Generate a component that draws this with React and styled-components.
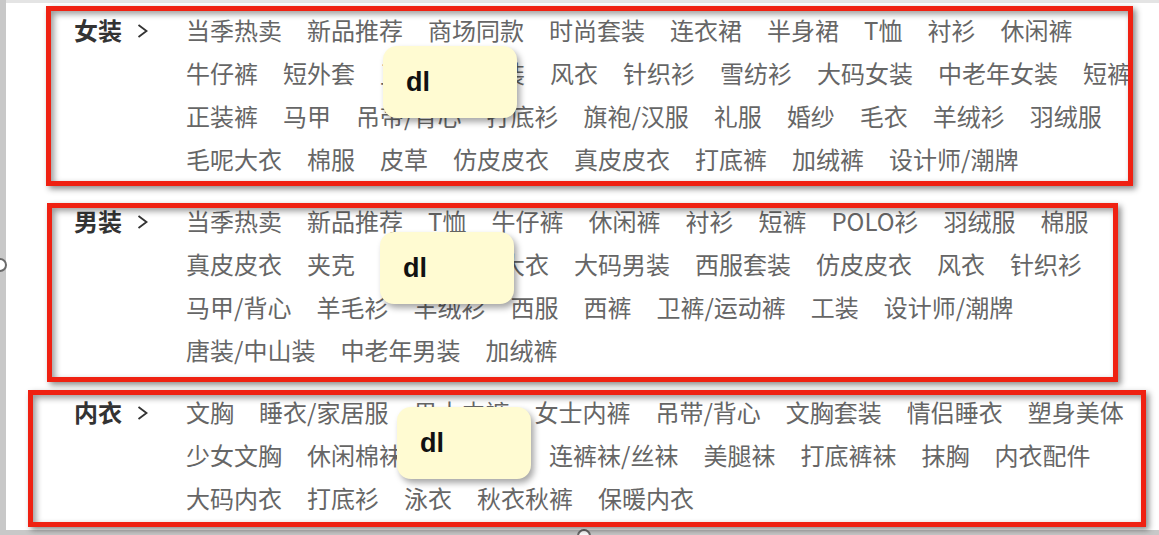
import React from 'react';
import styled, { createGlobalStyle } from 'styled-components';

const GlobalStyle = createGlobalStyle`
  html, body { margin: 0; padding: 0; background: #fff; overflow: hidden; }
  body { font-family: "Noto Sans CJK SC", "Noto Sans", sans-serif; }
`;

const Frame = styled.div`
  position: relative;
  width: 1159px;
  height: 535px;
  box-sizing: border-box;
  padding: 8px 0 0 74px;
  background: #fff;
  overflow: hidden;
  box-shadow: inset 6px 0 0 #c8c8c8, inset 0 3px 0 #e4e4e4, inset 0 -5px 0 #c8c8c8;
`;

const Category = styled.dl`
  position: relative;
  display: flex;
  width: 1076px;
  margin: 0 0 19px;
`;

const Title = styled.dt`
  flex: 0 0 112px;
  display: flex;
  align-items: center;
  gap: 15px;
  height: 43px;
  font-size: 24px;
  line-height: 43px;
  font-weight: 700;
  color: #333;
`;

const Chevron = styled.svg`
  width: 11px;
  height: 14px;
  margin-top: 2px;
  flex: none;
`;

const Items = styled.dd`
  flex: 1;
  margin: 0;
  display: flex;
  flex-wrap: wrap;
  column-gap: 25px;
`;

const Item = styled.a`
  font-size: 24px;
  line-height: 43px;
  color: #666;
  text-decoration: none;
  white-space: nowrap;
`;

const Marker = styled.div`
  position: absolute;
  left: ${(p) => p.$left}px;
  top: ${(p) => p.$top}px;
  width: ${(p) => p.$w}px;
  height: ${(p) => p.$h}px;
  box-sizing: border-box;
  border: 5px solid #ef2112;
  box-shadow: 3px 3px 6px rgba(0, 0, 0, 0.45), inset 3px 3px 6px rgba(0, 0, 0, 0.4);
  pointer-events: none;
  z-index: 2;
`;

const Tag = styled.div`
  position: absolute;
  left: ${(p) => p.$left}px;
  top: ${(p) => p.$top}px;
  width: 134px;
  height: 72px;
  box-sizing: border-box;
  padding-left: 23px;
  display: flex;
  align-items: center;
  background: #fffbd2;
  border-radius: 14px;
  box-shadow: 3px 4px 6px rgba(0, 0, 0, 0.35);
  font-family: "Liberation Sans", Arial, sans-serif;
  font-weight: 700;
  font-size: 27px;
  color: #111;
  z-index: 3;
`;

const Ring = styled.span`
  position: absolute;
  left: ${(p) => p.$left}px;
  top: ${(p) => p.$top}px;
  width: 14px;
  height: 14px;
  box-sizing: border-box;
  border: 2px solid #6a6a6a;
  border-radius: 50%;
  background: #fff;
`;

const data = [
  {
    title: '女装',
    items: ['当季热卖', '新品推荐', '商场同款', '时尚套装', '连衣裙', '半身裙', 'T恤', '衬衫', '休闲裤', '牛仔裤', '短外套', '卫衣', '小西装', '风衣', '针织衫', '雪纺衫', '大码女装', '中老年女装', '短裤', '正装裤', '马甲', '吊带/背心', '打底衫', '旗袍/汉服', '礼服', '婚纱', '毛衣', '羊绒衫', '羽绒服', '毛呢大衣', '棉服', '皮草', '仿皮皮衣', '真皮皮衣', '打底裤', '加绒裤', '设计师/潮牌'],
    marker: { left: -28, top: -2, w: 1087, h: 180 },
    tag: { left: 309, top: 38 },
  },
  {
    title: '男装',
    items: ['当季热卖', '新品推荐', 'T恤', '牛仔裤', '休闲裤', '衬衫', '短裤', 'POLO衫', '羽绒服', '棉服', '真皮皮衣', '夹克', '卫衣', '毛呢大衣', '大码男装', '西服套装', '仿皮皮衣', '风衣', '针织衫', '马甲/背心', '羊毛衫', '羊绒衫', '西服', '西裤', '卫裤/运动裤', '工装', '设计师/潮牌', '唐装/中山装', '中老年男装', '加绒裤'],
    marker: { left: -27, top: 4, w: 1071, h: 179 },
    tag: { left: 306, top: 33 },
  },
  {
    title: '内衣',
    items: ['文胸', '睡衣/家居服', '男士内裤', '女士内裤', '吊带/背心', '文胸套装', '情侣睡衣', '塑身美体', '少女文胸', '休闲棉袜', '商务男袜', '连裤袜/丝袜', '美腿袜', '打底裤袜', '抹胸', '内衣配件', '大码内衣', '打底衫', '泳衣', '秋衣秋裤', '保暖内衣'],
    marker: { left: -46, top: 0, w: 1118, h: 137 },
    tag: { left: 323, top: 17 },
  },
];

export default function App() {
  return (
    <>
      <GlobalStyle />
      <Frame>
        {data.map((cat) => (
          <Category key={cat.title}>
            <Title>
              {cat.title}
              <Chevron viewBox="0 0 11 14">
                <polyline points="1.5,1 9.5,7 1.5,13" fill="none" stroke="#333" strokeWidth="1.8" />
              </Chevron>
            </Title>
            <Items>
              {cat.items.map((it, i) => (
                <Item key={i} href="#">{it}</Item>
              ))}
            </Items>
            <Marker $left={cat.marker.left} $top={cat.marker.top} $w={cat.marker.w} $h={cat.marker.h} />
            <Tag $left={cat.tag.left} $top={cat.tag.top}>dl</Tag>
          </Category>
        ))}
        <Ring $left={-7} $top={258} />
        <Ring $left={577} $top={529} />
      </Frame>
    </>
  );
}
